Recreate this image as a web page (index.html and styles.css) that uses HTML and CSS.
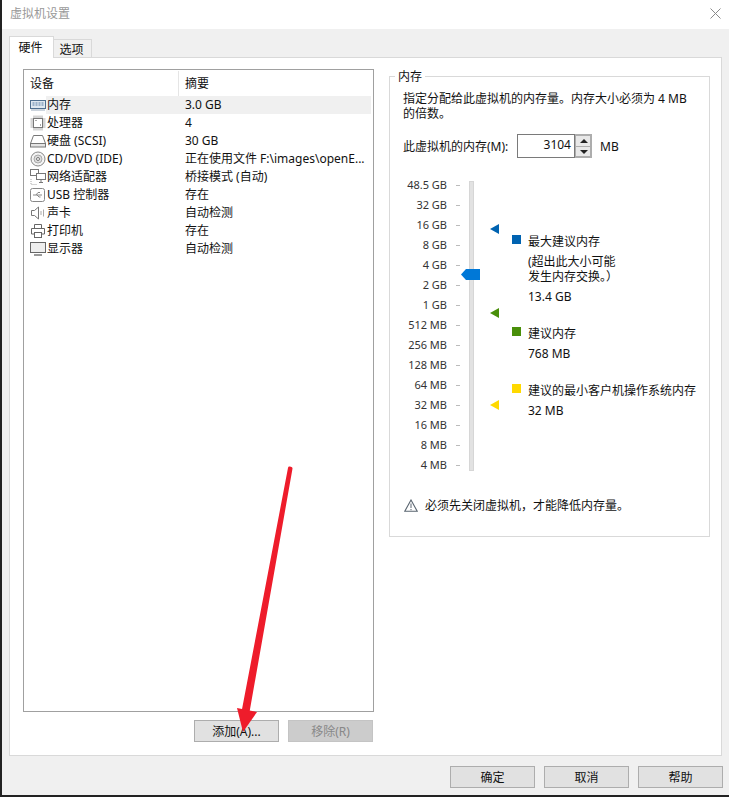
FILE: index.html
```html
<!DOCTYPE html>
<html lang="zh">
<head>
<meta charset="utf-8">
<title>虚拟机设置</title>
<link rel="stylesheet" href="styles.css">
</head>
<body>
<div class="window">
  <header class="titlebar">
    <span class="title">虚拟机设置</span>
    <svg class="close" viewBox="0 0 11 11"><path d="M.5.5l10 10M10.500.5l-10 10" stroke="#8a8a8a" fill="none"/></svg>
  </header>
  <div class="tabs">
    <div class="tab active">硬件</div>
    <div class="tab">选项</div>
  </div>
  <main class="panel">
    <section class="left">
      <div class="list">
        <div class="row head"><div class="c1">设备</div><div class="c2">摘要</div></div>
        <div class="row selected">
          <div class="c1"><svg class="ic" viewBox="0 0 16 12"><rect x=".5" y="1.500" width="15" height="8" fill="#dfe8f0" stroke="#4f6f8f"/><path d="M2.500 4h11M2.500 6h11" stroke="#5a7fa5" stroke-dasharray="2 1"/><path d="M1 11h14" stroke="#9ab"/></svg>内存</div>
          <div class="c2">3.0 GB</div>
        </div>
        <div class="row">
          <div class="c1"><svg class="ic" viewBox="0 0 16 16"><rect x="3.500" y="3.500" width="9" height="9" fill="#fff" stroke="#777"/><path d="M4 .5v2.500M6 .5v2.500M8 .5v2.500M10 .5v2.500M12 .5v2.500M4 13v2.500M6 13v2.500M8 13v2.500M10 13v2.500M12 13v2.500M.5 4h2.500M.5 6h2.500M.5 8h2.500M.5 10h2.500M.5 12h2.500M13 4h2.500M13 6h2.500M13 8h2.500M13 10h2.500M13 12h2.500" stroke="#aaa"/><path d="M5.500 5.500h1M10 10h1" stroke="#555"/></svg>处理器</div>
          <div class="c2">4</div>
        </div>
        <div class="row">
          <div class="c1"><svg class="ic" viewBox="0 0 16 14"><path d="M3.500 1.500h9l3 8h-15z" fill="#fff" stroke="#777"/><rect x=".5" y="9.500" width="15" height="3.500" fill="#e4e4e4" stroke="#777"/></svg>硬盘 (SCSI)</div>
          <div class="c2">30 GB</div>
        </div>
        <div class="row">
          <div class="c1"><svg class="ic" viewBox="0 0 16 16"><circle cx="8" cy="8" r="7" fill="#f4f4f4" stroke="#888"/><circle cx="8" cy="8" r="4" fill="#ddd" stroke="#aaa"/><circle cx="8" cy="8" r="1.500" fill="#fff" stroke="#777"/></svg>CD/DVD (IDE)</div>
          <div class="c2">正在使用文件 F:\images\openE...</div>
        </div>
        <div class="row">
          <div class="c1"><svg class="ic" viewBox="0 0 16 16"><rect x=".5" y=".5" width="8" height="6" fill="#fff" stroke="#777"/><rect x="6.500" y="4.500" width="9" height="6" fill="#fff" stroke="#777"/><path d="M11 11v2M9 13.500h4" stroke="#777"/><path d="M1 10v5.500h6" stroke="#aaa" stroke-dasharray="1 1" fill="none"/></svg>网络适配器</div>
          <div class="c2">桥接模式 (自动)</div>
        </div>
        <div class="row">
          <div class="c1"><svg class="ic" viewBox="0 0 16 16"><rect x=".5" y="1.500" width="14" height="13" rx="2" fill="#fff" stroke="#888"/><path d="M3 8h9M6 8l2-2.500h2M7 8l2 2h1.500" stroke="#888" fill="none"/></svg>USB 控制器</div>
          <div class="c2">存在</div>
        </div>
        <div class="row">
          <div class="c1"><svg class="ic" viewBox="0 0 16 16"><path d="M1.500 5.500h3l4-3.500v12l-4-3.500h-3z" fill="#fff" stroke="#777"/><path d="M11 6v4M13.500 4.500v7" stroke="#aaa" fill="none"/></svg>声卡</div>
          <div class="c2">自动检测</div>
        </div>
        <div class="row">
          <div class="c1"><svg class="ic" viewBox="0 0 16 16"><path d="M4.500 5V1.500h7V5M4.500 11h-3V5.500h13V11h-3" fill="#fff" stroke="#666"/><rect x="4.500" y="9.500" width="7" height="5" fill="#fff" stroke="#666"/></svg>打印机</div>
          <div class="c2">存在</div>
        </div>
        <div class="row">
          <div class="c1"><svg class="ic" viewBox="0 0 16 16"><rect x=".5" y="1.500" width="15" height="10" fill="#eee" stroke="#666"/><path d="M4 14h8" stroke="#999" stroke-width="2"/></svg>显示器</div>
          <div class="c2">自动检测</div>
        </div>
      </div>
      <div class="list-actions">
        <button class="btn">添加(A)...</button>
        <button class="btn disabled">移除(R)</button>
      </div>
    </section>
    <fieldset class="memory">
      <legend>内存</legend>
      <p class="desc">指定分配给此虚拟机的内存量。内存大小必须为 4 MB<br>的倍数。</p>
      <div class="spin-row">
        <span class="spin-label">此虚拟机的内存(M):</span>
        <div class="input">3104</div>
        <div class="spin">
          <span class="up"></span>
          <span class="down"></span>
        </div>
        <span class="unit">MB</span>
      </div>
      <div class="scale-area">
        <div class="scale">
          <div class="tick">48.5 GB</div>
          <div class="tick">32 GB</div>
          <div class="tick">16 GB</div>
          <div class="tick">8 GB</div>
          <div class="tick">4 GB</div>
          <div class="tick">2 GB</div>
          <div class="tick">1 GB</div>
          <div class="tick">512 MB</div>
          <div class="tick">256 MB</div>
          <div class="tick">128 MB</div>
          <div class="tick">64 MB</div>
          <div class="tick">32 MB</div>
          <div class="tick">16 MB</div>
          <div class="tick">8 MB</div>
          <div class="tick">4 MB</div>
        </div>
        <div class="track"></div>
        <svg class="thumb" viewBox="0 0 19 11"><path d="M5 0h14v11H5L0 5.500z" fill="#0078d7"/></svg>
        <span class="marker m-blue"></span>
        <span class="marker m-green"></span>
        <span class="marker m-yellow"></span>
        <div class="legend">
          <div class="entry blue">
            <p>最大建议内存</p>
            <p class="gap">(超出此大小可能<br>发生内存交换。）</p>
            <p class="gap">13.4 GB</p>
          </div>
          <div class="entry green">
            <p>建议内存</p>
            <p class="gap">768 MB</p>
          </div>
          <div class="entry yellow">
            <p>建议的最小客户机操作系统内存</p>
            <p class="gap">32 MB</p>
          </div>
        </div>
      </div>
      <div class="warning">
        <svg class="warn-ic" viewBox="0 0 14 13"><path d="M7 1L.8 12.200h12.400z" fill="#fff" stroke="#5a6570" stroke-width="1.100"/><path d="M7 4.500v4.500M7 10v1.200" stroke="#5a6570"/></svg>
        <span>必须先关闭虚拟机，才能降低内存量。</span>
      </div>
    </fieldset>
  </main>
  <footer class="footer">
    <button class="btn ok">确定</button>
    <button class="btn cancel">取消</button>
    <button class="btn help">帮助</button>
  </footer>
  <div class="under"></div>
</div>
<svg class="annotation" viewBox="0 0 729 797"><path d="M289.500 468L291 468.500 248 712 243 712z" fill="#ee1c2b" stroke="#ee1c2b" stroke-width="3" stroke-linejoin="round"/><path d="M237 708L257 712 243 732z" fill="#ee1c2b"/></svg>
</body>
</html>
```
FILE: styles.css
```css
* { box-sizing: border-box; }
html, body { margin: 0; padding: 0; }
body {
  width: 729px;
  height: 797px;
  overflow: hidden;
  position: relative;
  font: 12px/15px "Noto Sans", "Noto Sans CJK SC", sans-serif;
  color: #111;
}
p { margin: 0; }
.window {
  width: 729px;
  height: 797px;
  border-left: 2px solid #222;
  background: #f0f0f0;
  display: flex;
  flex-direction: column;
}
.titlebar {
  height: 29px;
  flex: none;
  background: #fff;
  display: flex;
  align-items: center;
  justify-content: space-between;
  padding: 0 8px 2px 8px;
}
.title { color: #999; }
.close { width: 11px; height: 11px; }
.tabs {
  flex: none;
  height: 22px;
  margin: 7px 0 0 7px;
  display: flex;
  align-items: flex-end;
  position: relative;
  z-index: 1;
}
.tab {
  width: 38px;
  height: 18px;
  margin-bottom: 1px;
  padding-right: 2px;
  border: 1px solid #d9d9d9;
  border-bottom: 0;
  border-left: 0;
  text-align: center;
  line-height: 19px;
}
.tab.active {
  width: 45px;
  height: 22px;
  margin-bottom: 0;
  background: #fff;
  border-left: 1px solid #d9d9d9;
  line-height: 22px;
}
.panel {
  flex: none;
  width: 713px;
  height: 699px;
  margin: -1px 0 0 7px;
  background: #fff;
  border: 1px solid #d9d9d9;
  padding: 11px 11px 0 13px;
  display: flex;
  gap: 15px;
}
.left { width: 351px; flex: none; }
.list {
  height: 643px;
  border: 1px solid #a0a0a0;
  padding: 1px 2px 0 1px;
}
.row {
  display: flex;
  height: 18px;
  line-height: 18px;
}
.row.selected { background: linear-gradient(to right, #fff 21px, #f0f0f0 21px); }
.row.head { height: 25px; line-height: 26px; }
.c1 {
  width: 154px;
  flex: none;
  display: flex;
  align-items: center;
  padding-left: 5px;
  gap: 1px;
  white-space: pre;
}
.c2 { padding-left: 6px; white-space: nowrap; }
.head .c1 { border-right: 1px solid #e5e5e5; }
.ic { width: 16px; height: 16px; flex: none; }
.list-actions {
  display: flex;
  justify-content: flex-end;
  gap: 9px;
  margin: 8px 1px 0 0;
}
.btn {
  width: 85px;
  height: 22px;
  padding: 0;
  background: #e1e1e1;
  border: 1px solid #adadad;
  font: inherit;
  color: #111;
}
.btn.disabled {
  background: #ccc;
  border-color: #c4c4c4;
  color: #888;
}
.memory {
  width: 321px;
  height: 468px;
  flex: none;
  margin: 0;
  min-width: 0;
  padding: 7px 13px 0;
  border: 1px solid #d9d9d9;
}
.memory legend {
  padding: 0 3px;
  margin-left: -8px;
  line-height: 15px;
}
.desc { line-height: 15px; }
.spin-row {
  display: flex;
  align-items: center;
  height: 24px;
  margin-top: 13px;
}
.spin-label { width: 114px; flex: none; }
.input {
  width: 58px;
  height: 24px;
  flex: none;
  border: 1px solid #7a7a7a;
  text-align: right;
  line-height: 20px;
  padding-right: 3px;
}
.spin {
  width: 17px;
  height: 24px;
  flex: none;
  display: flex;
  flex-direction: column;
  gap: 1px;
  padding: 1px;
  border: 1px solid #adadad;
  border-left: 0;
  background: #adadad;
}
.spin span {
  flex: 1;
  background: #e8e8e8;
  position: relative;
}
.spin span::after {
  content: "";
  position: absolute;
  left: 4px;
  top: 3px;
  border: 4px solid transparent;
  border-top: 0;
  border-bottom: 4px solid #222;
}
.spin .down::after {
  border-bottom: 0;
  border-top: 4px solid #222;
}
.unit { margin-left: 8px; }
.scale-area {
  display: flex;
  position: relative;
  margin-top: 18px;
  height: 300px;
}
.scale { width: 57px; flex: none; margin-top: -1px; }
.tick {
  height: 20px;
  line-height: 20px;
  text-align: right;
  font-size: 11px;
  color: #333;
  display: flex;
  justify-content: flex-end;
  align-items: center;
  gap: 9px;
}
.tick::after {
  content: "";
  width: 4px;
  height: 1px;
  background: #bbb;
}
.track {
  width: 5px;
  flex: none;
  height: 290px;
  margin: 5px 0 0 9px;
  background: #e2e2e2;
  border: 1px solid #d6d6d6;
}
.thumb {
  position: absolute;
  left: 58px;
  top: 93px;
  width: 19px;
  height: 11px;
}
.marker {
  position: absolute;
  left: 87px;
  width: 0;
  height: 0;
  border: 5px solid transparent;
  border-left: 0;
  border-right-width: 9px;
}
.m-blue { top: 48px; border-right-color: #0063b1; }
.m-green { top: 132px; border-right-color: #498f0a; }
.m-yellow { top: 224px; border-right-color: #ffd900; }
.legend {
  margin-left: 38px;
  padding-top: 58px;
  white-space: nowrap;
}
.entry {
  position: relative;
  padding-left: 16px;
  margin-bottom: 22px;
}
.entry::before {
  content: "";
  position: absolute;
  left: 0;
  top: 1px;
  width: 9px;
  height: 9px;
  background: #0063b1;
}
.entry.green::before { background: #498f0a; }
.entry.yellow::before { background: #ffd900; }
.gap { margin-top: 5px; }
.warning {
  display: flex;
  align-items: center;
  gap: 7px;
  margin: 22px 0 0 1px;
}
.warn-ic { width: 14px; height: 13px; flex: none; }
.footer {
  flex: none;
  display: flex;
  justify-content: flex-end;
  gap: 9px;
  padding: 10px 6px 0 0;
  height: 39px;
}
.under { flex: 1; background: #222; }
.annotation {
  position: absolute;
  left: 0;
  top: 0;
  width: 729px;
  height: 797px;
  pointer-events: none;
}
```
